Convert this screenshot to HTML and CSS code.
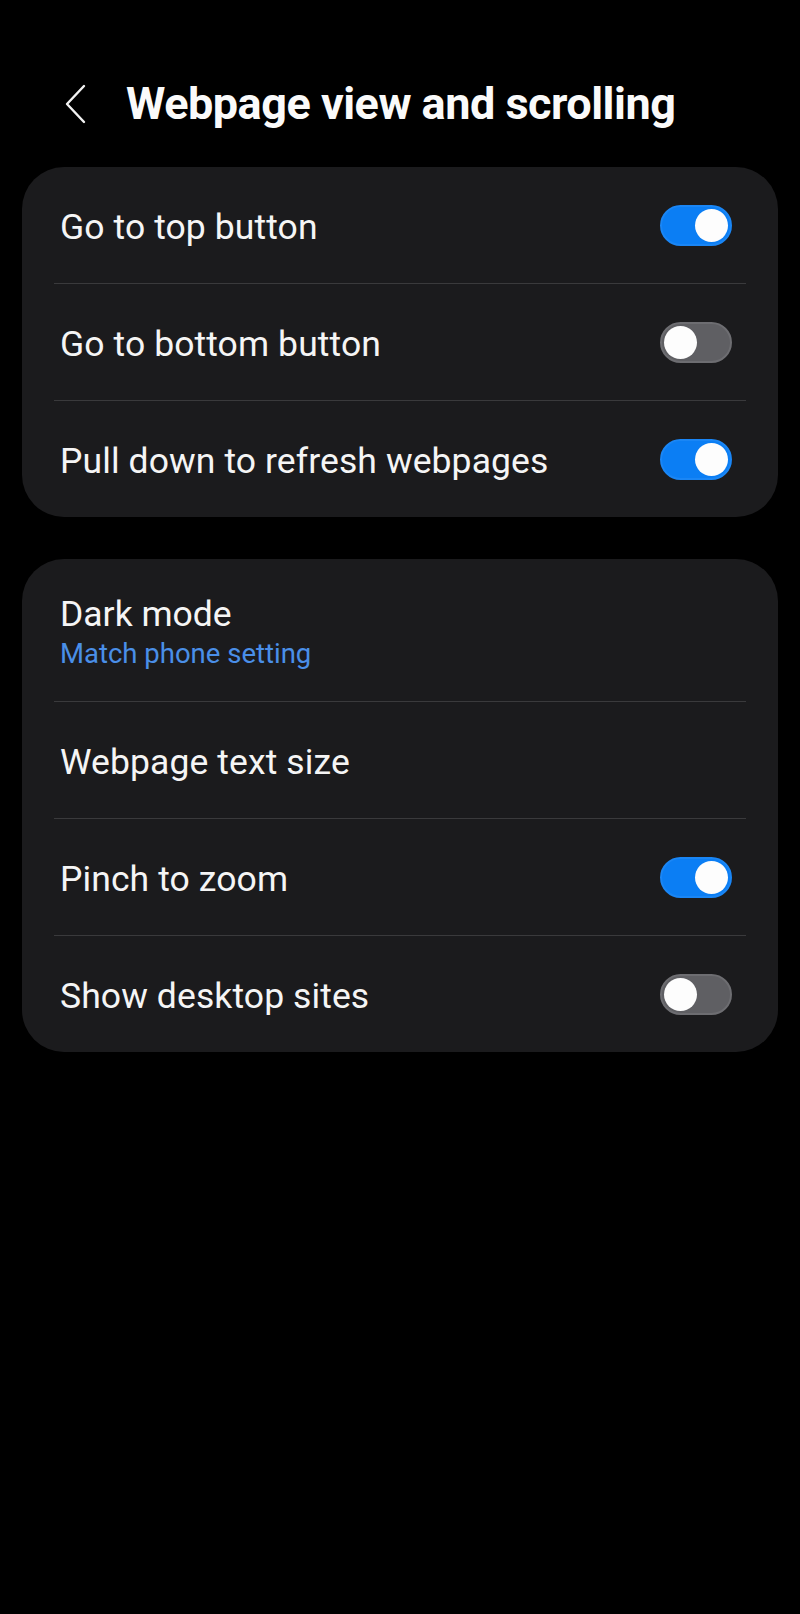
FILE: index.html
```html
<!DOCTYPE html>
<html>

<head>
    <meta charset="UTF-8">
    <meta name="viewport" content="width=device-width, initial-scale=1.0">
    <title>Webpage view and scrolling</title>
    <link rel="stylesheet" href="styles.css">
</head>

<body>
    <div class="header">
        <svg class="back-icon" width="22" height="40" viewBox="0 0 22 40">
            <path d="M20 2 L3 20 L20 38" fill="none" stroke="#f2f2f2" stroke-width="2.4" stroke-linecap="round" stroke-linejoin="round" />
        </svg>
        <h1>Webpage view and scrolling</h1>
    </div>

    <div class="card">
        <div class="row">
            <span class="label">Go to top button</span>
            <span class="switch on"></span>
        </div>
        <div class="row">
            <span class="label">Go to bottom button</span>
            <span class="switch"></span>
        </div>
        <div class="row">
            <span class="label">Pull down to refresh webpages</span>
            <span class="switch on"></span>
        </div>
    </div>

    <div class="card">
        <div class="row tall">
            <div>
                <div class="label">Dark mode</div>
                <div class="sub">Match phone setting</div>
            </div>
        </div>
        <div class="row">
            <span class="label">Webpage text size</span>
        </div>
        <div class="row">
            <span class="label">Pinch to zoom</span>
            <span class="switch on"></span>
        </div>
        <div class="row">
            <span class="label">Show desktop sites</span>
            <span class="switch"></span>
        </div>
    </div>
</body>

</html>
```

FILE: styles.css
```css
body {
    font-family: Roboto, "Noto Sans", sans-serif;
    background-color: #000;
    color: #f5f5f5;
    margin: 0;
    padding: 0 22px;
    height: 1614px;
}

.header {
    display: flex;
    align-items: center;
    height: 167px;
    padding: 40px 0 0 42px;
    box-sizing: border-box;
}

.back-icon {
    display: block;
}

h1 {
    font-size: 45px;
    font-weight: 700;
    margin: 0 0 0 40px;
    color: #fafafa;
    letter-spacing: -0.5px;
    line-height: 1.2;
}

.card {
    background-color: #1b1b1d;
    border-radius: 42px;
    margin-bottom: 42px;
    overflow: hidden;
}

.row {
    display: flex;
    align-items: center;
    justify-content: space-between;
    height: 116px;
    margin: 0 32px;
    padding: 0 14px 0 6px;
    border-bottom: 1px solid #3a3a3c;
}

.row:last-child {
    border-bottom: none;
}

.row.tall {
    height: 142px;
}

.label {
    font-size: 35.5px;
    color: #f5f5f5;
    padding-top: 3px;
}

.row > .label {
    letter-spacing: 0.1px;
}

.sub {
    font-size: 27.5px;
    color: #4a8fe8;
    margin-top: 2px;
}

.switch {
    position: relative;
    width: 72px;
    height: 41px;
    border-radius: 21px;
    background-color: #5f5f63;
    box-sizing: border-box;
    border: 2px solid #6d6d71;
    flex-shrink: 0;
}

.switch::after {
    content: "";
    position: absolute;
    top: 2px;
    left: 2px;
    width: 33px;
    height: 33px;
    border-radius: 50%;
    background-color: #fdfdfd;
}

.switch.on {
    background-color: #0b7ef4;
    border-color: #1a86f5;
}

.switch.on::after {
    left: auto;
    right: 2px;
}
```
